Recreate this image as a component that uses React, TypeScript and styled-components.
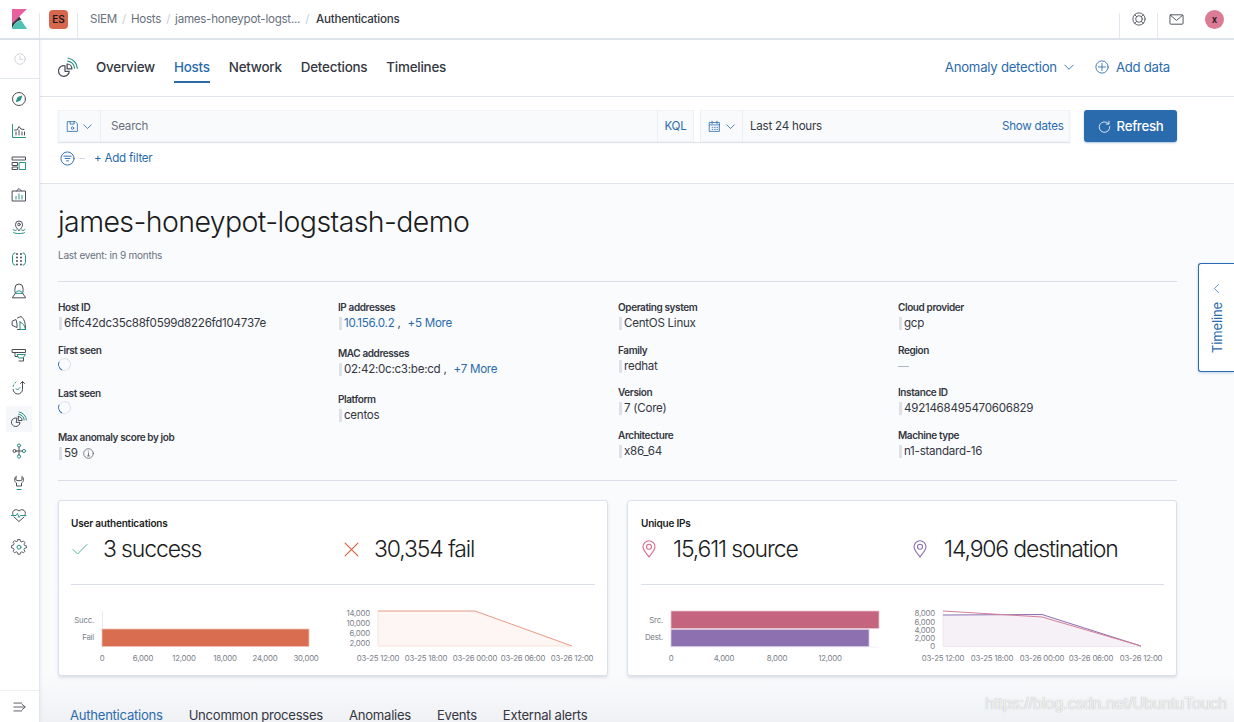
import React from "react";
import styled, { createGlobalStyle } from "styled-components";

const Global = createGlobalStyle`
  html, body { margin: 0; padding: 0; background: #fff; }
  * { box-sizing: border-box; }
  body { font-family: Inter, "Noto Sans", sans-serif; color: #343741; }
`;

const Page = styled.div`
  position: relative;
  width: 1234px;
  height: 722px;
  overflow: hidden;
  display: flex;
  flex-direction: column;
`;

/* ---------- top bar ---------- */
const TopBar = styled.header`
  flex: 0 0 40px;
  height: 40px;
  display: flex;
  align-items: stretch;
  border-bottom: 2px solid #dfe3ec;
  background: #fff;
`;
const LogoCell = styled.div`
  width: 40px;
  display: flex;
  align-items: center;
  justify-content: center;
  border-right: 1px solid #e3e7ef;
  margin-top: 13px;
  & > svg { margin-top: -13px; }
`;
const SpaceCell = styled.div`
  width: 38px;
  display: flex;
  align-items: center;
  justify-content: center;
  border-right: 1px solid #e3e7ef;
  margin-top: 13px;
`;
const SpaceBadge = styled.div`
  width: 19px;
  height: 19px;
  margin-top: -13px;
  border-radius: 4px;
  background: #d6674c;
  color: #1a1c21;
  font-size: 10px;
  font-weight: 600;
  display: flex;
  align-items: center;
  justify-content: center;
`;
const Crumbs = styled.nav`
  flex: 1;
  display: flex;
  align-items: center;
  padding: 0 0 1px 12px;
  font-size: 11.6px;
  letter-spacing: -0.023em;
  color: #69707d;
`;
const Crumb = styled.span<{ $current?: boolean }>`
  color: ${(p) => (p.$current ? "#343741" : "#69707d")};
  font-weight: ${(p) => (p.$current ? 500 : 400)};
  margin-left: ${(p) => (p.$current ? "2px" : "0")};
`;
const CrumbSep = styled.span`
  color: #c9ced8;
  width: 14px;
  text-align: center;
`;
const TopIconCell = styled.div<{ $line?: boolean; $w: number }>`
  width: ${(p) => p.$w}px;
  display: flex;
  align-items: center;
  justify-content: center;
  margin-top: 13px;
  border-left: ${(p) => (p.$line ? "1px solid #e3e7ef" : "none")};
  & > * { margin-top: -13px; }
`;
const Avatar = styled.div`
  width: 19px;
  height: 19px;
  border-radius: 50%;
  background: #dd7a96;
  color: #1a1c21;
  font-size: 9.5px;
  font-weight: 600;
  display: flex;
  align-items: center;
  justify-content: center;
`;

/* ---------- shell ---------- */
const Shell = styled.div`
  flex: 1;
  min-height: 0;
  display: flex;
`;
const Sidebar = styled.aside`
  flex: 0 0 40px;
  display: flex;
  flex-direction: column;
  align-items: stretch;
  border-right: 1px solid #e3e7ef;
  box-shadow: 1px 0 3px rgba(152, 162, 179, 0.15);
  background: #fff;
  z-index: 1;
`;
const SideRecent = styled.div`
  height: 39px;
  display: flex;
  align-items: center;
  justify-content: center;
  border-bottom: 1px solid #e3e7ef;
  margin-bottom: 4px;
`;
const SideList = styled.div`
  flex: 1;
  display: flex;
  flex-direction: column;
  padding: 0 7px 0 6px;
`;
const SideItem = styled.div<{ $active?: boolean }>`
  height: 32px;
  padding: 3px 0;
  display: flex;
  align-items: center;
  justify-content: center;
  border-radius: 4px;
  background: ${(p) => (p.$active ? "#f5f7fa" : "transparent")};
  background-clip: content-box;
`;
const SideFooter = styled.div`
  height: 32px;
  display: flex;
  align-items: center;
  justify-content: center;
  border-top: 1px solid #eef0f4;
`;

const Main = styled.main`
  flex: 1;
  min-width: 0;
  display: flex;
  flex-direction: column;
  background: #fafbfd;
`;
const NavRow = styled.div`
  flex: 0 0 57px;
  display: flex;
  align-items: center;
  padding: 0 64px 2px 18px;
  background: #fff;
  border-bottom: 1px solid #dfe3ec;
`;
const NavLogo = styled.div`
  width: 38px;
  display: flex;
  align-items: center;
`;
const NavTabs = styled.div`
  flex: 1;
  display: flex;
  gap: 19px;
`;
const NavTab = styled.div<{ $active?: boolean }>`
  font-size: 13.4px;
  font-weight: 500;
  letter-spacing: -0.017em;
  line-height: 28px;
  padding-top: 1px;
  color: ${(p) => (p.$active ? "#2a6bad" : "#343741")};
  border-bottom: 2px solid ${(p) => (p.$active ? "#2a6bad" : "transparent")};
  height: 31px;
`;
const NavLink = styled.div`
  display: flex;
  align-items: center;
  font-size: 13.2px;
  letter-spacing: -0.02em;
  color: #2a6bad;
`;
const AddData = styled(NavLink)`
  margin-left: 20px;
  gap: 7px;
`;
const Chevron = styled.span`
  display: inline-flex;
  margin-left: 6px;
`;

const SearchArea = styled.section`
  flex: 0 0 87px;
  padding: 13px 57px 0 18px;
  background: #fff;
  border-bottom: 1px solid #dfe3ec;
`;
const SearchRow = styled.div`
  display: flex;
  height: 32px;
`;
const SearchBox = styled.div`
  flex: 1;
  display: flex;
  align-items: stretch;
  background: #f9fafc;
  box-shadow: 0 1px 1px rgba(152, 162, 179, 0.3), inset 0 0 0 1px rgba(223, 227, 236, 0.35);
  font-size: 11.6px;
  letter-spacing: -0.02em;
  color: #69707d;
  margin-right: 14px;
`;
const SaveBtn = styled.div`
  width: 43px;
  display: flex;
  align-items: center;
  justify-content: center;
  gap: 3px;
  border-right: 1px solid #eceff4;
`;
const QueryInput = styled.div`
  flex: 1;
  display: flex;
  align-items: center;
  padding-left: 10px;
`;
const KqlBtn = styled.div`
  width: 37px;
  display: flex;
  align-items: center;
  justify-content: center;
  color: #2a6bad;
  border-left: 1px solid #eceff4;
  border-right: 1px solid #eceff4;
`;
const CalendarGap = styled.div`
  width: 6px;
  background: #fff;
`;
const CalendarBtn = styled.div`
  width: 43px;
  display: flex;
  align-items: center;
  justify-content: center;
  gap: 4px;
  border-left: 1px solid #eceff4;
  border-right: 1px solid #eceff4;
`;
const TimeLabel = styled.div`
  flex: 0 0 259px;
  display: flex;
  align-items: center;
  padding-left: 7px;
  color: #343741;
`;
const ShowDates = styled.div`
  flex: 0 0 68px;
  display: flex;
  align-items: center;
  color: #2a6bad;
`;
const RefreshBtn = styled.button`
  width: 93px;
  border: none;
  border-radius: 3px;
  background: #2a6bad;
  color: #fff;
  font: 500 13.2px Inter, sans-serif;
  letter-spacing: -0.02em;
  display: flex;
  align-items: center;
  justify-content: center;
  gap: 6px;
  padding: 0;
  box-shadow: 0 1px 2px rgba(42, 107, 173, 0.4);
`;
const FilterRow = styled.div`
  display: flex;
  align-items: center;
  height: 32px;
  padding-left: 2px;
  gap: 4px;
  font-size: 11.6px;
  letter-spacing: -0.02em;
  color: #2a6bad;
`;
const FilterDash = styled.span`
  width: 6px;
  height: 1px;
  background: #d3dae6;
  margin: 0 5px 0 0;
`;

const Content = styled.section`
  flex: 1;
  min-height: 0;
  padding: 0 57px 0 18px;
  background: linear-gradient(#fafbfd 0, #fafbfd 490px, #f0f1f4 100%);
  overflow: hidden;
`;
const Title = styled.h1`
  margin: 19px 0 0;
  font-size: 28.5px;
  line-height: 37px;
  font-weight: 300;
  letter-spacing: -0.021em;
  color: #1a1c21;
`;
const LastEvent = styled.div`
  margin-top: 7px;
  font-size: 10px;
  letter-spacing: -0.024em;
  line-height: 16px;
  color: #69707d;
`;
const Rule = styled.hr`
  border: none;
  height: 1px;
  margin: 0;
  background: #d9deea;
`;
const HeaderRule = styled(Rule)`
  margin-top: 18px;
`;
const Details = styled.div`
  display: grid;
  grid-template-columns: repeat(4, 280px);
  padding-top: 19px;
  height: 198px;
`;
const DetailCol = styled.div`
  display: flex;
  flex-direction: column;
`;
const Field = styled.div<{ $h: number }>`
  height: ${(p) => p.$h}px;
`;
const FieldLabel = styled.div`
  font-size: 10px;
  font-weight: 600;
  letter-spacing: -0.04em;
  line-height: 12px;
  color: #343741;
`;
const FieldValue = styled.div`
  display: flex;
  align-items: center;
  margin-top: 2px;
  height: 16px;
  font-size: 11.6px;
  letter-spacing: -0.023em;
  color: #343741;
`;
const Grip = styled.span`
  flex: none;
  width: 3px;
  height: 13px;
  margin: 0 2px 0 1px;
  background: #dde0e7;
`;
const ValueLink = styled.span`
  color: #2a6bad;
`;
const MoreLink = styled(ValueLink)`
  margin-left: 7px;
`;
const Comma = styled.span`
  margin-left: 3px;
`;
const Spinner = styled.span`
  flex: none;
  width: 13px;
  height: 13px;
  margin-top: -3px;
  border-radius: 50%;
  border: 1.5px solid #d9deea;
  border-left-color: #2a6bad;
  transform: rotate(-20deg);
`;
const NoValue = styled.span`
  width: 11px;
  height: 1px;
  background: #aeb6c6;
`;
const InfoWrap = styled.span`
  display: inline-flex;
  margin-left: 5px;
`;

const Cards = styled.div`
  display: grid;
  grid-template-columns: 550px 550px;
  column-gap: 19px;
  padding-top: 19px;
`;
const Card = styled.article<{ $inset: number }>`
  height: 176px;
  background: #fff;
  border: 1px solid #dbe0ea;
  border-radius: 3px;
  box-shadow: 0 2px 3px rgba(152, 162, 179, 0.3);
  padding: 16px 12px 0 ${(p) => p.$inset}px;
`;
const CardTitle = styled.div`
  font-size: 10px;
  font-weight: 600;
  letter-spacing: -0.02em;
  line-height: 12px;
  color: #1a1c21;
`;
const Stats = styled.div`
  display: grid;
  grid-template-columns: 271px 1fr;
  height: 53px;
  margin-top: 2px;
  padding-top: 4px;
`;
const Stat = styled.div`
  display: flex;
  align-items: flex-start;
  font-size: 23px;
  line-height: 28px;
  font-weight: 300;
  letter-spacing: -0.05em;
  color: #1a1c21;
`;
const StatIcon = styled.span`
  width: 32px;
  height: 28px;
  display: flex;
  align-items: center;
  padding-left: 1px;
`;
const Charts = styled.div`
  display: flex;
  height: 91px;
`;
const ChartSvg = styled.svg`
  display: block;
  font-family: Inter, sans-serif;
  font-size: 7.8px;
  letter-spacing: -0.2px;
  fill: #7b8089;
`;

const BottomTabs = styled.div`
  display: flex;
  gap: 26px;
  padding: 32px 0 0 12px;
  font-size: 13.1px;
  letter-spacing: -0.02em;
  line-height: 14px;
`;
const BottomTab = styled.div<{ $active?: boolean }>`
  color: ${(p) => (p.$active ? "#2a6bad" : "#343741")};
  white-space: nowrap;
`;

const TimelineTab = styled.div`
  position: absolute;
  right: 0;
  top: 263px;
  width: 36px;
  height: 109px;
  background: #fff;
  border: 1px solid #2a6bad;
  border-right: none;
  border-radius: 3px 0 0 3px;
  box-shadow: 0 1px 3px rgba(42, 107, 173, 0.3);
  display: flex;
  flex-direction: column;
  align-items: center;
  padding-top: 19px;
  gap: 8px;
  color: #2a6bad;
`;
const TimelineText = styled.span`
  writing-mode: vertical-rl;
  transform: rotate(180deg);
  font-size: 13px;
  letter-spacing: -0.01em;
  line-height: 16px;
`;
const Watermark = styled.div`
  position: absolute;
  left: 985px;
  top: 692px;
  font-family: "Liberation Sans", Arial, sans-serif;
  font-size: 16px;
  line-height: 24px;
  color: rgba(255, 255, 255, 0.85);
  text-shadow: 0 0 1px rgba(120, 120, 120, 0.7);
  white-space: nowrap;
`;

/* ---------- icons ---------- */
const D = "#4a4e58";
const T = "#2a9187";

const Svg: React.FC<{ size?: number; children: React.ReactNode; color?: string; w?: number }> = ({ size = 16, children, color = D, w = 1 }) => (
  <svg width={size} height={size} viewBox="0 0 16 16" fill="none" stroke={color} strokeWidth={w} strokeLinecap="round" strokeLinejoin="round">
    {children}
  </svg>
);

const KibanaLogo = () => (
  <svg width="15" height="20" viewBox="0 0 15 20">
    <path d="M0 0h15L0 14.500z" fill="#e8609f" />
    <path d="M0 14.500 7.300 7.500 9.500 11C5.500 11.500 2 14 0 20z" fill="#343741" />
    <path d="M0 20C1.500 15 5 12 9.300 11.500L15 20z" fill="#4dc2b5" />
  </svg>
);

const SiemIcon = ({ size = 16 }: { size?: number }) => (
  <Svg size={size}>
    <path d="M5.600 7a4.300 4.300 0 1 0 3.400 4.400H5.600z" />
    <path d="M7.300 5.600v3.900h3.800a3.900 3.900 0 0 0-3.800-3.900z" />
    <path d="M7.800 3.300a6.300 6.300 0 0 1 5.400 5.700" stroke={T} />
    <path d="M8.200 1a8.500 8.500 0 0 1 7.200 8" stroke={T} />
  </Svg>
);

const sideIcons: React.ReactNode[] = [
  <Svg key="discover"><circle cx="8" cy="8" r="6.500" /><path d="M10.700 5.300 9.200 9.200 5.300 10.700 6.800 6.800z" fill={T} stroke={T} /></Svg>,
  <Svg key="vis"><path d="M1.500 1.500v13h13" stroke={T} /><path d="M3.500 7 6 7 8 3.500l2 2.500 3 .5" /><path d="M5 12V9M8 12V7M11 12V9M13.500 12V9" /></Svg>,
  <Svg key="dash"><rect x="1.500" y="2" width="13" height="3" /><rect x="1.500" y="7.500" width="5" height="3" /><rect x="1.500" y="12" width="5" height="2.500" /><rect x="8.500" y="7.500" width="6" height="7" stroke={T} /></Svg>,
  <Svg key="canvas"><rect x="1.500" y="4" width="13" height="10" /><path d="M5.500 4 8 1.500 10.500 4" /><path d="M5 12V9.500M8 12V7M11 12V8.500" stroke={T} /></Svg>,
  <Svg key="maps"><path d="M8 11.500C6 9.500 4.500 8 4.500 5.500a3.500 3.500 0 0 1 7 0C11.500 8 10 9.500 8 11.500z" /><circle cx="8" cy="5.500" r="1.300" /><path d="M2 10.500c1.500 1.500 2.500 1 3.500.5M10.500 11c1 .5 2 1 3.500-.5M2.500 13.500c1.500 1 3.500 1 5.500 1s4 0 5.500-1" stroke={T} /></Svg>,
  <Svg key="ml"><path d="M4 2H3L1.500 4.500v7L3 14h1M12 2h1l1.500 2.500v7L13 14h-1" stroke={T} /><circle cx="6" cy="3" r="1" fill={D} stroke="none" /><circle cx="10" cy="3" r="1" fill={D} stroke="none" /><circle cx="6" cy="6.500" r="1" fill={D} stroke="none" /><circle cx="10" cy="6.500" r="1" fill={D} stroke="none" /><circle cx="6" cy="10" r="1" fill={D} stroke="none" /><circle cx="10" cy="10" r="1" fill={D} stroke="none" /><circle cx="6" cy="13.500" r="1" fill={D} stroke="none" /><circle cx="10" cy="13.500" r="1" fill={D} stroke="none" /></Svg>,
  <Svg key="metrics"><path d="M1.500 14.500 4.500 10C3.500 8.500 4 7 4 5a4 4 0 0 1 8 0c0 2 .5 3.500-.5 5l3 4.500z" /><path d="M4.500 10C6 7 10 7 11.500 10z" stroke={T} /></Svg>,
  <Svg key="logs"><path d="M1.500 6 5 4.500 6 9v3.500L1.500 10.500z" /><path d="M6.500 3 10 1.500c3 2 4.500 6 4.500 13H6.500" /><path d="M9 7v7.500h5.500C14 11 12 8 9 7z" stroke={T} /></Svg>,
  <Svg key="apm"><path d="M1.500 2.500h13v3h-13zM4 5.500v4h2.500" /><path d="M6.500 7.500h8L12 11H8z" stroke={T} /><path d="M12.500 11v3H8" /></Svg>,
  <Svg key="uptime"><path d="M11.500 2.500v7.800a4.700 4.700 0 0 1-9.400 0" /><path d="M9.500 4.500l2-2 2 2" /><path d="M5 9.500l1.500 1.500L9 8.500" stroke={T} /><path d="M2.200 7.500l.5-1.500M4 4l1-.8" stroke={T} /></Svg>,
  <SiemIcon key="siem" />,
  <Svg key="dev"><circle cx="3.500" cy="8" r="1.500" /><circle cx="8" cy="2.500" r="1.600" stroke={T} /><circle cx="8" cy="13.500" r="1.600" stroke={T} /><circle cx="13" cy="8" r="1.600" stroke={T} /><path d="M5 8h6.400M8 4.100v7.800" /></Svg>,
  <Svg key="tool"><path d="M5 1.500C3 3 3 6.500 5.500 8v3h5V8C13 6.500 13 3 11 1.500V5C10 6 6 6 5 5z" /><path d="M6 14.500h4" stroke={T} /></Svg>,
  <Svg key="heart"><path d="M1.800 7.500C.5 4 4.500 .8 8 4c3.500-3.200 7.500 0 6.200 3.500M3 10l5 4.500 5-4.500" /><path d="M.5 8.500h4.500l1.500-2 1.500 4 1.500-2h5.500" stroke={T} /></Svg>,
  <Svg key="gear"><path d="M6.800 1h2.400l.4 2 1.600.7 1.700-1.100 1.700 1.700-1.100 1.700.7 1.600 2 .4v2.400l-2 .4-.7 1.600 1.100 1.700-1.700 1.700-1.700-1.100-1.600.7-.4 2H6.800l-.4-2-1.600-.7-1.700 1.100-1.700-1.700 1.100-1.700-.7-1.600-2-.4V7.600l2-.4.7-1.600-1.100-1.700 1.700-1.700 1.700 1.100 1.600-.7z" transform="translate(.8 -.4) scale(.9)" /><circle cx="8" cy="8.200" r="2" stroke={T} /></Svg>,
];

const ChevronDown = ({ color = "#2a6bad", size = 12 }: { color?: string; size?: number }) => (
  <Svg size={size} color={color} w={1.2}><path d="M2.500 5.500 8 11l5.500-5.500" /></Svg>
);

const Pin = ({ color }: { color: string }) => (
  <svg width="14" height="18" viewBox="0 0 14 18" fill="none" stroke={color} strokeWidth="1.100">
    <path d="M7 17C4 13 1 10 1 6.800a6 6 0 0 1 12 0C13 10 10 13 7 17z" />
    <circle cx="7" cy="6.800" r="2.500" />
  </svg>
);

/* ---------- charts ---------- */
const AXIS = "#e8eaee";

const AuthBarChart = () => (
  <ChartSvg width="262" height="91" viewBox="71 585 262 91">
    <line x1="102.500" y1="611" x2="102.500" y2="647" stroke={AXIS} />
    <rect x="102" y="629" width="207" height="17.500" fill="#d96d50" stroke="#f0c3b5" strokeWidth=".8" />
    <text x="94" y="623" textAnchor="end">Succ.</text>
    <text x="94" y="640" textAnchor="end">Fail</text>
    {[[102, "0"], [143, "6,000"], [184, "12,000"], [225, "18,000"], [265, "24,000"], [306, "30,000"]].map(([x, l]) => (
      <text key={l as string} x={x as number} y="661" textAnchor="middle">{l}</text>
    ))}
  </ChartSvg>
);
const AuthAreaChart = () => (
  <ChartSvg width="262" height="91" viewBox="333 585 262 91">
    <path d="M378 611H475L572 646H378z" fill="#fdf6f4" />
    <path d="M378 646V611M378 646H572" fill="none" stroke="#f8e3dc" strokeWidth="1" />
    <path d="M378 611H475L572 646" fill="none" stroke="#e69a85" strokeWidth="1" />
    {[[616, "14,000"], [626, "10,000"], [636, "6,000"], [646, "2,000"]].map(([y, l]) => (
      <text key={l as string} x="370" y={y as number} textAnchor="end">{l}</text>
    ))}
    {[[378, "03-25 12:00"], [426, "03-25 18:00"], [475, "03-26 00:00"], [523, "03-26 06:00"], [572, "03-26 12:00"]].map(([x, l]) => (
      <text key={l as string} x={x as number} y="661" textAnchor="middle">{l}</text>
    ))}
  </ChartSvg>
);
const IpBarChart = () => (
  <ChartSvg width="262" height="91" viewBox="641 585 262 91">
    <line x1="671" y1="647" x2="879" y2="647" stroke="#f1f2f5" />
    <rect x="671" y="611" width="208" height="17.500" fill="#c4647f" stroke="#ecc6d1" strokeWidth=".8" />
    <rect x="671" y="629.500" width="198" height="17" fill="#8c70b0" stroke="#d5cae3" strokeWidth=".8" />
    <text x="663" y="623" textAnchor="end">Src.</text>
    <text x="663" y="640" textAnchor="end">Dest.</text>
    {[[671, "0"], [724, "4,000"], [777, "8,000"], [830, "12,000"]].map(([x, l]) => (
      <text key={l as string} x={x as number} y="661" textAnchor="middle">{l}</text>
    ))}
  </ChartSvg>
);
const IpAreaChart = () => (
  <ChartSvg width="261" height="91" viewBox="903 585 261 91">
    <path d="M943 615 1042 614.500 1141 646H943z" fill="#f6f1f7" />
    <line x1="943" y1="611" x2="943" y2="646" stroke="#eee7f0" />
    <line x1="943" y1="646.500" x2="1141" y2="646.500" stroke="#eee7f0" />
    <path d="M943 615 1042 614.500 1141 646" fill="none" stroke="#8c70b0" strokeWidth="1" />
    <path d="M943 611 1042 617 1141 646" fill="none" stroke="#d47f98" strokeWidth="1" />
    {[[616, "8,000"], [625, "6,000"], [633, "4,000"], [641, "2,000"], [649, "0"]].map(([y, l]) => (
      <text key={l as string} x="935" y={y as number} textAnchor="end">{l}</text>
    ))}
    {[[943, "03-25 12:00"], [992, "03-25 18:00"], [1042, "03-26 00:00"], [1091, "03-26 06:00"], [1141, "03-26 12:00"]].map(([x, l]) => (
      <text key={l as string} x={x as number} y="661" textAnchor="middle">{l}</text>
    ))}
  </ChartSvg>
);

const V = ({ children }: { children: React.ReactNode }) => (
  <FieldValue><Grip />{children}</FieldValue>
);

export default function App() {
  return (
    <Page>
      <Global />
      <TopBar>
        <LogoCell><KibanaLogo /></LogoCell>
        <SpaceCell><SpaceBadge>ES</SpaceBadge></SpaceCell>
        <Crumbs>
          <Crumb>SIEM</Crumb><CrumbSep>/</CrumbSep>
          <Crumb>Hosts</Crumb><CrumbSep>/</CrumbSep>
          <Crumb>james-honeypot-logst...</Crumb><CrumbSep>/</CrumbSep>
          <Crumb $current>Authentications</Crumb>
        </Crumbs>
        <TopIconCell $line $w={38}>
          <Svg size={14}><circle cx="8" cy="8" r="7" /><circle cx="8" cy="8" r="3.800" /><path d="M3 3l2.300 2.300M13 3l-2.300 2.300M3 13l2.300-2.300M13 13l-2.300-2.300" /></Svg>
        </TopIconCell>
        <TopIconCell $line $w={38}>
          <Svg size={15}><rect x="1" y="3" width="14" height="10" rx="1" /><path d="M1.500 3.500 8 9l6.500-5.500" /></Svg>
        </TopIconCell>
        <TopIconCell $w={39}><Avatar>x</Avatar></TopIconCell>
      </TopBar>
      <Shell>
        <Sidebar>
          <SideRecent>
            <Svg size={12} color="#c2c7d0"><circle cx="8" cy="8" r="7" /><path d="M8 4v4.500h3.500" /></Svg>
          </SideRecent>
          <SideList>
            {sideIcons.map((icon, i) => (
              <SideItem key={i} $active={i === 10}>{icon}</SideItem>
            ))}
          </SideList>
          <SideFooter>
            <Svg size={14}><path d="M1 3.500h9M1 8h12.500M1 12.500h9M10.500 5 14 8l-3.500 3" /></Svg>
          </SideFooter>
        </Sidebar>
        <Main>
          <NavRow>
            <NavLogo><SiemIcon size={20} /></NavLogo>
            <NavTabs>
              <NavTab>Overview</NavTab>
              <NavTab $active>Hosts</NavTab>
              <NavTab>Network</NavTab>
              <NavTab>Detections</NavTab>
              <NavTab>Timelines</NavTab>
            </NavTabs>
            <NavLink>Anomaly detection<Chevron><ChevronDown /></Chevron></NavLink>
            <AddData>
              <Svg size={14} color="#2a6bad"><circle cx="8" cy="8" r="7" /><path d="M8 4v8M4 8h8" /></Svg>
              Add data
            </AddData>
          </NavRow>
          <SearchArea>
            <SearchRow>
              <SearchBox>
                <SaveBtn>
                  <Svg size={13} color="#2a6bad"><path d="M2 2h9.500L14 4.500V14H2z" /><path d="M5 2v3h5V2" /><circle cx="8" cy="10" r="1.500" /></Svg>
                  <ChevronDown size={11} />
                </SaveBtn>
                <QueryInput>Search</QueryInput>
                <KqlBtn>KQL</KqlBtn>
                <CalendarGap />
                <CalendarBtn>
                  <Svg size={13} color="#2a6bad"><rect x="2" y="3" width="12" height="11" /><path d="M2 6h12M5 1.500v3M11 1.500v3M5 9h1M8 9h1M11 9h1M5 11.500h1M8 11.500h1M11 11.500h1" /></Svg>
                  <ChevronDown size={11} />
                </CalendarBtn>
                <TimeLabel>Last 24 hours</TimeLabel>
                <ShowDates>Show dates</ShowDates>
              </SearchBox>
              <RefreshBtn>
                <Svg size={13} color="#fff"><path d="M13 4.500A6.500 6.500 0 1 0 14.500 8" /><path d="M13.500 1.500v3.500H10" /></Svg>
                Refresh
              </RefreshBtn>
            </SearchRow>
            <FilterRow>
              <Svg size={15} color="#2a6bad"><circle cx="8" cy="8" r="7" /><path d="M4 5.500h8M5.500 8h5M7 10.500h2" /></Svg>
              <FilterDash />
              + Add filter
            </FilterRow>
          </SearchArea>
          <Content>
            <Title>james-honeypot-logstash-demo</Title>
            <LastEvent>Last event: in 9 months</LastEvent>
            <HeaderRule />
            <Details>
              <DetailCol>
                <Field $h={43}><FieldLabel>Host ID</FieldLabel><V>6ffc42dc35c88f0599d8226fd104737e</V></Field>
                <Field $h={43}><FieldLabel>First seen</FieldLabel><FieldValue><Spinner /></FieldValue></Field>
                <Field $h={44}><FieldLabel>Last seen</FieldLabel><FieldValue><Spinner /></FieldValue></Field>
                <Field $h={44}>
                  <FieldLabel>Max anomaly score by job</FieldLabel>
                  <V>59<InfoWrap><Svg size={11}><circle cx="8" cy="8" r="7" /><path d="M8 7v4.500M6.500 11.500h3M7.500 4.500h.5" /></Svg></InfoWrap></V>
                </Field>
              </DetailCol>
              <DetailCol>
                <Field $h={46}><FieldLabel>IP addresses</FieldLabel><V><ValueLink>10.156.0.2</ValueLink><Comma>,</Comma><MoreLink>+5 More</MoreLink></V></Field>
                <Field $h={46}><FieldLabel>MAC addresses</FieldLabel><V>02:42:0c:c3:be:cd<Comma>,</Comma><MoreLink>+7 More</MoreLink></V></Field>
                <Field $h={46}><FieldLabel>Platform</FieldLabel><V>centos</V></Field>
              </DetailCol>
              <DetailCol>
                <Field $h={43}><FieldLabel>Operating system</FieldLabel><V>CentOS Linux</V></Field>
                <Field $h={42}><FieldLabel>Family</FieldLabel><V>redhat</V></Field>
                <Field $h={43}><FieldLabel>Version</FieldLabel><V>7 (Core)</V></Field>
                <Field $h={43}><FieldLabel>Architecture</FieldLabel><V>x86_64</V></Field>
              </DetailCol>
              <DetailCol>
                <Field $h={43}><FieldLabel>Cloud provider</FieldLabel><V>gcp</V></Field>
                <Field $h={42}><FieldLabel>Region</FieldLabel><FieldValue><NoValue /></FieldValue></Field>
                <Field $h={43}><FieldLabel>Instance ID</FieldLabel><V>4921468495470606829</V></Field>
                <Field $h={43}><FieldLabel>Machine type</FieldLabel><V>n1-standard-16</V></Field>
              </DetailCol>
            </Details>
            <Rule />
            <Cards>
              <Card $inset={12}>
                <CardTitle>User authentications</CardTitle>
                <Stats>
                  <Stat><StatIcon><Svg size={16} color="#4fb39a"><path d="M1 8.500 5.500 13 15 3.500" /></Svg></StatIcon>3 success</Stat>
                  <Stat><StatIcon><Svg size={17} color="#d9603f" w={1.1}><path d="M2 2l12 12M14 2 2 14" /></Svg></StatIcon>30,354 fail</Stat>
                </Stats>
                <Rule />
                <Charts><AuthBarChart /><AuthAreaChart /></Charts>
              </Card>
              <Card $inset={13}>
                <CardTitle>Unique IPs</CardTitle>
                <Stats>
                  <Stat><StatIcon><Pin color="#d9688a" /></StatIcon>15,611 source</Stat>
                  <Stat><StatIcon><Pin color="#8c70b0" /></StatIcon>14,906 destination</Stat>
                </Stats>
                <Rule />
                <Charts><IpBarChart /><IpAreaChart /></Charts>
              </Card>
            </Cards>
            <BottomTabs>
              <BottomTab $active>Authentications</BottomTab>
              <BottomTab>Uncommon processes</BottomTab>
              <BottomTab>Anomalies</BottomTab>
              <BottomTab>Events</BottomTab>
              <BottomTab>External alerts</BottomTab>
            </BottomTabs>
          </Content>
        </Main>
      </Shell>
      <TimelineTab>
        <Svg size={11} color="#2a6bad"><path d="M11 2 5 8l6 6" /></Svg>
        <TimelineText>Timeline</TimelineText>
      </TimelineTab>
      <Watermark>https://blog.csdn.net/UbuntuTouch</Watermark>
    </Page>
  );
}
